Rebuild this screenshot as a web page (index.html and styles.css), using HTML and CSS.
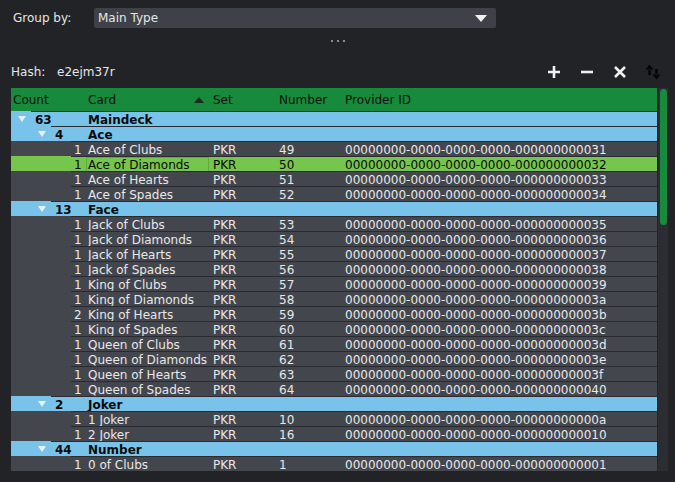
FILE: index.html
```html
<!DOCTYPE html>
<html lang="en">
<head>
  <meta charset="UTF-8">
  <title>Deck View</title>
  <link rel="stylesheet" href="styles.css">
</head>
<body>
  <div class="group-bar">
    <label>Group by:</label>
    <div class="combo">
      <span>Main Type</span>
      <i class="combo-arrow"></i>
    </div>
  </div>

  <div class="grip"><i></i><i></i><i></i></div>

  <div class="hash-bar">
    <span class="hash-label">Hash:</span>
    <span class="hash-value">e2ejm37r</span>
    <div class="tools">
      <svg width="16" height="16" viewBox="0 0 16 16"><path d="M8 2v12M2 8h12" stroke="#f0f0f0" stroke-width="2.6"/></svg>
      <svg width="16" height="16" viewBox="0 0 16 16"><path d="M2 8h12" stroke="#f0f0f0" stroke-width="2.6"/></svg>
      <svg width="16" height="16" viewBox="0 0 16 16"><path d="M3 3l10 10M13 3L3 13" stroke="#f0f0f0" stroke-width="2.6"/></svg>
      <svg width="16" height="16" viewBox="0 0 16 16"><path d="M4.5 0.5L0.5 5.5h8z M3.3 5h2.5v6H3.3z M11.5 15.5l4-5h-8z M10.2 5h2.5v6h-2.5z" fill="#050505"/></svg>
    </div>
  </div>

  <div class="view">
    <div class="table">
      <div class="head">
        <span class="h-count">Count</span>
        <span class="h-card">Card<i class="sort"></i></span>
        <span class="h-set">Set</span>
        <span class="h-num">Number</span>
        <span class="h-id">Provider ID</span>
      </div>

      <div class="row grp d0"><span class="branch"><i></i></span><div class="cells"><span>63</span><span>Maindeck</span><span></span><span></span><span></span></div></div>
      <div class="row grp d1"><span class="branch"><i></i></span><div class="cells"><span>4</span><span>Ace</span><span></span><span></span><span></span></div></div>
      <div class="row d2"><span class="branch"></span><div class="cells"><span>1</span><span>Ace of Clubs</span><span>PKR</span><span>49</span><span>00000000-0000-0000-0000-000000000031</span></div></div>
      <div class="row d2 sel"><span class="branch"></span><div class="cells"><span>1</span><span class="focus">Ace of Diamonds</span><span>PKR</span><span>50</span><span>00000000-0000-0000-0000-000000000032</span></div></div>
      <div class="row d2"><span class="branch"></span><div class="cells"><span>1</span><span>Ace of Hearts</span><span>PKR</span><span>51</span><span>00000000-0000-0000-0000-000000000033</span></div></div>
      <div class="row d2"><span class="branch"></span><div class="cells"><span>1</span><span>Ace of Spades</span><span>PKR</span><span>52</span><span>00000000-0000-0000-0000-000000000034</span></div></div>
      <div class="row grp d1"><span class="branch"><i></i></span><div class="cells"><span>13</span><span>Face</span><span></span><span></span><span></span></div></div>
      <div class="row d2"><span class="branch"></span><div class="cells"><span>1</span><span>Jack of Clubs</span><span>PKR</span><span>53</span><span>00000000-0000-0000-0000-000000000035</span></div></div>
      <div class="row d2"><span class="branch"></span><div class="cells"><span>1</span><span>Jack of Diamonds</span><span>PKR</span><span>54</span><span>00000000-0000-0000-0000-000000000036</span></div></div>
      <div class="row d2"><span class="branch"></span><div class="cells"><span>1</span><span>Jack of Hearts</span><span>PKR</span><span>55</span><span>00000000-0000-0000-0000-000000000037</span></div></div>
      <div class="row d2"><span class="branch"></span><div class="cells"><span>1</span><span>Jack of Spades</span><span>PKR</span><span>56</span><span>00000000-0000-0000-0000-000000000038</span></div></div>
      <div class="row d2"><span class="branch"></span><div class="cells"><span>1</span><span>King of Clubs</span><span>PKR</span><span>57</span><span>00000000-0000-0000-0000-000000000039</span></div></div>
      <div class="row d2"><span class="branch"></span><div class="cells"><span>1</span><span>King of Diamonds</span><span>PKR</span><span>58</span><span>00000000-0000-0000-0000-00000000003a</span></div></div>
      <div class="row d2"><span class="branch"></span><div class="cells"><span>2</span><span>King of Hearts</span><span>PKR</span><span>59</span><span>00000000-0000-0000-0000-00000000003b</span></div></div>
      <div class="row d2"><span class="branch"></span><div class="cells"><span>1</span><span>King of Spades</span><span>PKR</span><span>60</span><span>00000000-0000-0000-0000-00000000003c</span></div></div>
      <div class="row d2"><span class="branch"></span><div class="cells"><span>1</span><span>Queen of Clubs</span><span>PKR</span><span>61</span><span>00000000-0000-0000-0000-00000000003d</span></div></div>
      <div class="row d2"><span class="branch"></span><div class="cells"><span>1</span><span>Queen of Diamonds</span><span>PKR</span><span>62</span><span>00000000-0000-0000-0000-00000000003e</span></div></div>
      <div class="row d2"><span class="branch"></span><div class="cells"><span>1</span><span>Queen of Hearts</span><span>PKR</span><span>63</span><span>00000000-0000-0000-0000-00000000003f</span></div></div>
      <div class="row d2"><span class="branch"></span><div class="cells"><span>1</span><span>Queen of Spades</span><span>PKR</span><span>64</span><span>00000000-0000-0000-0000-000000000040</span></div></div>
      <div class="row grp d1"><span class="branch"><i></i></span><div class="cells"><span>2</span><span>Joker</span><span></span><span></span><span></span></div></div>
      <div class="row d2"><span class="branch"></span><div class="cells"><span>1</span><span>1 Joker</span><span>PKR</span><span>10</span><span>00000000-0000-0000-0000-00000000000a</span></div></div>
      <div class="row d2"><span class="branch"></span><div class="cells"><span>1</span><span>2 Joker</span><span>PKR</span><span>16</span><span>00000000-0000-0000-0000-000000000010</span></div></div>
      <div class="row grp d1"><span class="branch"><i></i></span><div class="cells"><span>44</span><span>Number</span><span></span><span></span><span></span></div></div>
      <div class="row d2"><span class="branch"></span><div class="cells"><span>1</span><span>0 of Clubs</span><span>PKR</span><span>1</span><span>00000000-0000-0000-0000-000000000001</span></div></div>
    </div>
    <div class="vscroll"><div class="thumb"></div></div>
  </div>
</body>
</html>
```

FILE: styles.css
```css
* {
  margin: 0;
  padding: 0;
  box-sizing: border-box;
}

body {
  font-family: 'DejaVu Sans', sans-serif;
  font-size: 12px;
  background-color: #222327;
  color: #e6e6e6;
  overflow: hidden;
}

/* top: group by combo */
.group-bar {
  display: flex;
  align-items: center;
  height: 28px;
  padding-top: 8px;
  padding-left: 13px;
}

.group-bar label {
  width: 81px;
}

.combo {
  display: flex;
  align-items: center;
  width: 402px;
  height: 20px;
  padding: 0 9px 0 4px;
  background: #3f4148;
  border-radius: 2px;
}

.combo span {
  flex: 1;
}

.combo-arrow {
  width: 0;
  height: 0;
  border-left: 6px solid transparent;
  border-right: 6px solid transparent;
  border-top: 7px solid #f0f0f0;
}

/* splitter handle */
.grip {
  display: flex;
  justify-content: center;
  align-items: center;
  gap: 4px;
  height: 24px;
  padding-top: 1px;
}

.grip i {
  width: 2px;
  height: 2px;
  background: #8a8b90;
}

/* hash + tool buttons */
.hash-bar {
  display: flex;
  align-items: center;
  height: 24px;
  margin-top: 8px;
  margin-bottom: 4px;
  padding-left: 11px;
  padding-right: 14px;
}

.hash-label {
  width: 46px;
}

.tools {
  margin-left: auto;
  display: flex;
  gap: 17px;
}

.tools svg {
  display: block;
}

/* tree view */
.view {
  display: flex;
  margin-left: 11px;
  height: 383px;
}

.table {
  width: 646px;
  background: #44464e;
  align-self: flex-start;
}

.head {
  display: flex;
  height: 23px;
  align-items: center;
  background: #178a3c;
  color: #101010;
}

.head span {
  padding-left: 4px;
  white-space: nowrap;
}

.h-count { width: 73px; padding-left: 2px !important; }
.h-card { width: 125px; display: flex; align-items: center; }
.h-set { width: 66px; }
.h-num { width: 66px; }
.h-id { flex: 1; }

.sort {
  margin-left: auto;
  margin-right: 5px;
  width: 0;
  height: 0;
  border-left: 5px solid transparent;
  border-right: 5px solid transparent;
  border-bottom: 6px solid #1e2a22;
}

.row {
  display: flex;
  height: 15px;
  background: #44464e;
  color: #e8e8e8;
}

.row.d1 { padding-left: 20px; }
.row.d2 { padding-left: 40px; }

.row.grp {
  background: #79c3ea;
  color: #0a0a0a;
  font-weight: bold;
}

.row.sel {
  background: #76c54d;
  color: #0a0a0a;
}

.branch {
  flex: none;
  width: 20px;
  display: flex;
  align-items: center;
  justify-content: center;
}

.branch i {
  width: 0;
  height: 0;
  margin-left: 2px;
  border-left: 4px solid transparent;
  border-right: 4px solid transparent;
  border-top: 6px solid #e4f3fb;
}

.cells {
  flex: 1;
  display: grid;
  grid-template-columns: 53px 125px 66px 66px 1fr;
  border-top: 1px solid #2a2b30;
}

.d1 .cells { grid-template-columns: 33px 125px 66px 66px 1fr; }
.d2 .cells { grid-template-columns: 13px 125px 66px 66px 1fr; }

.cells span {
  padding-left: 4px;
  padding-top: 1px;
  line-height: 14px;
  white-space: nowrap;
}

.d2 .cells span:first-child {
  padding-left: 3px;
}

.cells .focus {
  box-shadow: inset 0 0 0 1px #5fab3b;
  margin-left: 2px;
  padding-left: 2px;
}

/* scrollbar */
.vscroll {
  width: 10px;
  margin-left: 1px;
  background: #2c2d32;
  padding: 1px 1px 0 2px;
}

.thumb {
  height: 136px;
  background: #178a3c;
  border-radius: 4px;
}
```
